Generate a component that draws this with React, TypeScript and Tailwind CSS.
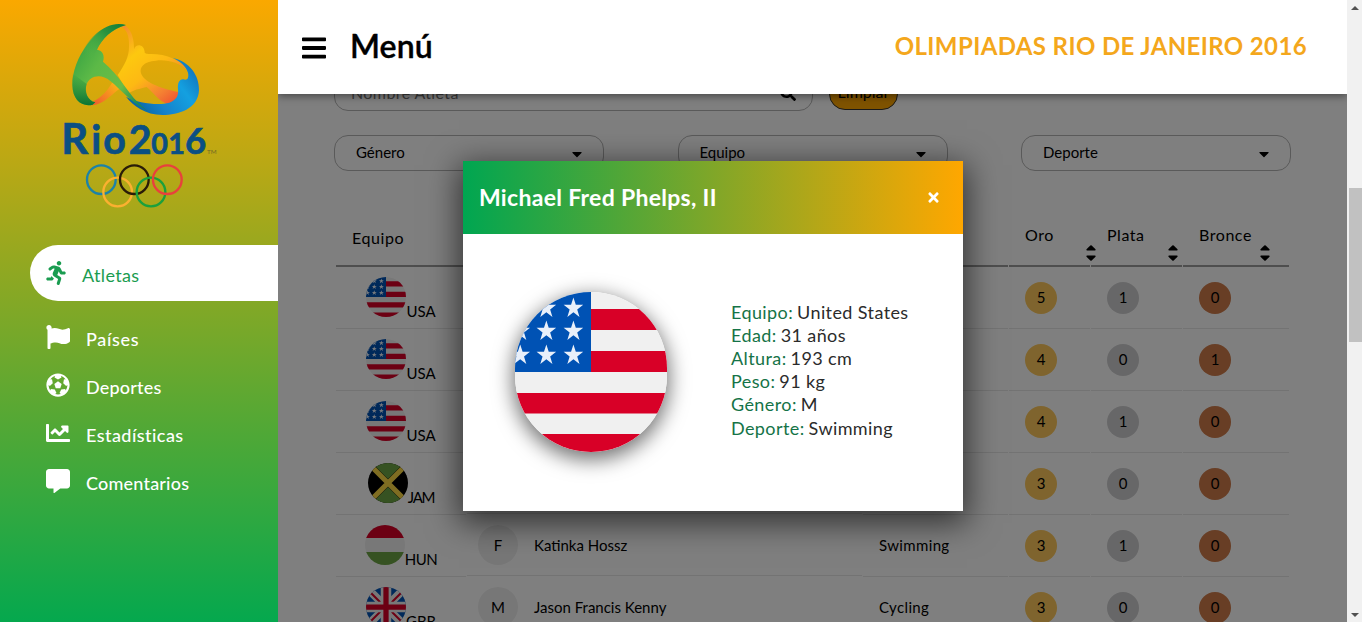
import React from "react";
import {
  FaBars,
  FaCaretDown,
  FaChartLine,
  FaCommentAlt,
  FaFlag,
  FaFutbol,
  FaRunning,
  FaSearch,
  FaTimes,
} from "react-icons/fa";

type Country = "USA" | "JAM" | "HUN" | "GBR";

interface Row {
  country: Country;
  gender?: string;
  name?: string;
  sport?: string;
  medals: [number, number, number];
}

const rows: Row[] = [
  { country: "USA", medals: [5, 1, 0] },
  { country: "USA", medals: [4, 0, 1] },
  { country: "USA", medals: [4, 1, 0] },
  { country: "JAM", medals: [3, 0, 0] },
  { country: "HUN", gender: "F", name: "Katinka Hossz", sport: "Swimming", medals: [3, 1, 0] },
  { country: "GBR", gender: "M", name: "Jason Francis Kenny", sport: "Cycling", medals: [3, 0, 0] },
];

const details = [
  { label: "Equipo:", value: "United States" },
  { label: "Edad:", value: "31 años" },
  { label: "Altura:", value: "193 cm" },
  { label: "Peso:", value: "91 kg" },
  { label: "Género:", value: "M" },
  { label: "Deporte:", value: "Swimming" },
];

const links = [
  { label: "Países", Icon: FaFlag, tracking: "tracking-[0.7px]" },
  { label: "Deportes", Icon: FaFutbol, tracking: "tracking-[0.2px]" },
  { label: "Estadísticas", Icon: FaChartLine, tracking: "tracking-[0.45px]" },
  { label: "Comentarios", Icon: FaCommentAlt, tracking: "tracking-[0.2px]" },
];

const codeTracking: Record<Country, string> = {
  USA: "",
  JAM: "tracking-[-1.2px]",
  HUN: "tracking-[-0.5px]",
  GBR: "",
};

const stars = [
  [61.5, 16],
  [33, 16],
  [61.5, 39],
  [33, 39],
  [5.5, 39],
  [61.5, 63],
  [33, 63],
  [5.5, 63],
];

function Flag({ country, className }: { country: Country; className: string }) {
  return (
    <svg viewBox="0 0 160 160" preserveAspectRatio="none" className={`shrink-0 rounded-full ${className}`}>
      {country === "USA" && (
        <>
          <path fill="#f0f0f0" d="M0 0h160v160H0z" />
          <path fill="#d80027" d="M80 17h80v21H80zM80 59h80v21H80zM0 101h160v20.500H0zM0 142h160v18H0z" />
          <path fill="#0052b4" d="M0 0h80v80H0z" />
          {stars.map(([x, y]) => (
            <path
              key={`${x}-${y}`}
              transform={`translate(${x} ${y})`}
              fill="#e9f0fa"
              d="M0-10.500 2.500-3.300 10.300-3.300 4 1.400 6.400 9 0 4.300-6.400 9-4 1.400-10.300-3.300-2.500-3.300z"
            />
          ))}
        </>
      )}
      {country === "JAM" && (
        <>
          <path fill="#000" d="M0 0h160v160H0z" />
          <path fill="#6da544" d="M16 0h128L80 64zM16 160h128L80 96z" />
          <path stroke="#ffda44" strokeWidth="21" d="M14 14 146 146M146 14 14 146" />
        </>
      )}
      {country === "HUN" && (
        <>
          <path fill="#f0f0f0" d="M0 0h160v160H0z" />
          <path fill="#d80027" d="M0 0h160v52H0z" />
          <path fill="#6da544" d="M0 108h160v52H0z" />
        </>
      )}
      {country === "GBR" && (
        <>
          <path fill="#0052b4" d="M0 0h160v160H0z" />
          <path stroke="#f0f0f0" strokeWidth="32" d="M0 0 160 160M160 0 0 160" />
          <path stroke="#d80027" strokeWidth="8" d="M0 4 76 80M84 80 160 156M160 4 84 80M76 80 0 156" />
          <path stroke="#f0f0f0" strokeWidth="42" d="M80 0v160M0 80h160" />
          <path stroke="#d80027" strokeWidth="21" d="M80 0v160M0 80h160" />
        </>
      )}
    </svg>
  );
}

function Logo() {
  return (
    <svg viewBox="0 0 540 630" className="h-[210px] w-[180px]" fill="none">
      <defs>
        <linearGradient id="leaf" x1="70" y1="150" x2="300" y2="300" gradientUnits="userSpaceOnUse">
          <stop offset="0" stopColor="#3fa743" />
          <stop offset="0.25" stopColor="#5cb947" />
          <stop offset="0.6" stopColor="#6cbc45" />
          <stop offset="0.85" stopColor="#1b8a55" />
          <stop offset="1" stopColor="#0b6f9d" />
        </linearGradient>
        <linearGradient id="base" x1="0" y1="190" x2="0" y2="285" gradientUnits="userSpaceOnUse">
          <stop offset="0" stopColor="#0f7a35" stopOpacity="0" />
          <stop offset="1" stopColor="#0c7434" />
        </linearGradient>
        <linearGradient id="crown" x1="228" y1="45" x2="120" y2="150" gradientUnits="userSpaceOnUse">
          <stop offset="0" stopColor="#137a34" />
          <stop offset="0.4" stopColor="#2a9340" />
          <stop offset="1" stopColor="#5cb947" stopOpacity="0" />
        </linearGradient>
        <linearGradient id="sun" x1="215" y1="60" x2="385" y2="275" gradientUnits="userSpaceOnUse">
          <stop offset="0" stopColor="#f5912a" />
          <stop offset="0.3" stopColor="#fdc80f" />
          <stop offset="0.55" stopColor="#fdb913" />
          <stop offset="0.8" stopColor="#f58232" />
          <stop offset="1" stopColor="#ee5030" />
        </linearGradient>
        <linearGradient id="ember" x1="205" y1="215" x2="125" y2="280" gradientUnits="userSpaceOnUse">
          <stop offset="0" stopColor="#fdb913" />
          <stop offset="1" stopColor="#ef5a30" />
        </linearGradient>
        <linearGradient id="sea" x1="430" y1="180" x2="270" y2="300" gradientUnits="userSpaceOnUse">
          <stop offset="0" stopColor="#1279c0" />
          <stop offset="0.3" stopColor="#14a0e0" />
          <stop offset="0.7" stopColor="#1583cc" />
          <stop offset="1" stopColor="#0a69a8" />
        </linearGradient>
      </defs>
      <path fill="url(#ember)" d="M118 279C150 270 180 235 196 200L222 228C190 245 165 284 125 286Z" />
      <path
        fill="url(#sun)"
        d="M205 41C240 42 253 80 252 118C256 101 281 100 284 125C283 131 292 132 302 132C350 132 396 150 414 184C390 157 350 148 318 152C280 155 268 172 273 190C281 215 325 234 384 246C386 265 375 280 350 281C325 272 308 245 290 231C272 236 245 240 236 252L203 195C224 165 237 140 237 110C238 80 232 55 205 46Z"
      />
      <path
        fill="url(#sea)"
        d="M368 144C420 155 448 198 447 240C445 297 385 315 338 315C285 314 250 288 228 260C265 280 325 287 358 278C382 270 386 254 384 238C382 220 388 207 400 208C413 212 417 203 414 188C408 168 390 154 368 144Z"
      />
      <path
        fill="url(#leaf)"
        d="M228 45C150 25 66 140 67 225C68 270 95 292 128 284L136 277C112 272 103 245 109 225C118 195 155 190 180 212C215 240 240 275 296 305L262 275C235 250 208 195 159 155C165 138 158 120 141 119C155 88 185 56 228 45Z"
      />
      <path fill="url(#base)" d="M67 190L110 222C103 245 112 272 136 277L128 284C95 292 68 270 67 225Z" />
      <path
        fill="url(#crown)"
        d="M228 45C175 28 112 78 84 150L130 140L141 119C155 88 185 56 228 45Z"
      />
      <g fill="#0b4f83" stroke="#0b4f83" strokeWidth="2" fontSize="118" className="font-['Lato'] font-bold">
        <text x="34" y="432" fontSize="126">
          R
        </text>
        <text x="124 160 236" y="432">
          io2
        </text>
        <text x="304 355" y="432" fontSize="86">
          01
        </text>
        <text x="405" y="432" fontSize="110">
          6
        </text>
      </g>
      <text x="471" y="432" fill="#6f6a26" fontSize="19" textLength="29" className="font-['Lato']">
        TM
      </text>
      <g strokeWidth="7">
        <circle cx="154" cy="509" r="43" stroke="#1c82a8" />
        <circle cx="203" cy="546" r="43" stroke="#fbb030" />
        <circle cx="253" cy="509" r="43" stroke="#2a1c08" />
        <circle cx="303" cy="546" r="43" stroke="#1ba03c" />
        <circle cx="352" cy="509" r="43" stroke="#e8413c" />
      </g>
    </svg>
  );
}

function Sidebar() {
  return (
    <aside className="flex w-[278px] shrink-0 flex-col bg-linear-to-b/srgb from-[#faa800] to-[#05a84e]">
      <div className="h-[245px] pt-[10px] pl-[50px]">
        <Logo />
      </div>
      <nav className="flex flex-col text-[18px] leading-6 text-white">
        <a className="ml-[30px] flex h-14 items-center gap-4 rounded-l-full bg-white pl-4 text-[#1a9c50]">
          <FaRunning className="h-6 w-5" />
          <span className="pt-1 tracking-[0.35px]">Atletas</span>
        </a>
        <div className="flex flex-col gap-6 pt-6 pl-[46px]">
          {links.map(({ label, Icon, tracking }) => (
            <a key={label} className="flex h-6 items-center gap-4">
              <Icon className="size-6" />
              <span className={`pt-1 font-medium ${tracking}`}>{label}</span>
            </a>
          ))}
        </div>
      </nav>
    </aside>
  );
}

function Select({ label }: { label: string }) {
  return (
    <div className="flex h-9 w-[270px] items-center justify-between rounded-[14px] border border-[#b4b4b4] pr-[18px] pl-[21px] text-[15px]">
      <span className="pb-[2px]">{label}</span>
      <FaCaretDown className="mt-[2px] size-4" />
    </div>
  );
}

const medalColors = ["bg-[#ffc95c]", "bg-[#cfcfd1]", "bg-[#d07c4a]"];
const gridColumns = "grid grid-cols-[130px_395px_145px_81px_91px_106px] gap-x-px";

function SortArrows() {
  return (
    <svg viewBox="0 0 10 16" className="absolute bottom-1 left-[77px] h-4 w-[10px]" fill="currentColor">
      <path d="M4.300.5Q5-.1 5.700.5L9.500 4.300Q9.900 5.300 9 5.500H1Q.1 5.300.5 4.300Z" />
      <path d="M4.300 15.500Q5 16.100 5.700 15.500L9.500 11.700Q9.900 10.700 9 10.500H1Q.1 10.700.5 11.700Z" />
    </svg>
  );
}

function Table() {
  return (
    <div className="mx-[2px] text-[15px]">
      <div className={`${gridColumns} h-[96px] text-[16px]`}>
        <div className="flex items-end border-b-2 border-[#9c9c9c] pb-[15px] pl-4 tracking-[0.6px]">Equipo</div>
        <div className="border-b-2 border-[#9c9c9c]" />
        <div className="border-b-2 border-[#9c9c9c]" />
        {["Oro", "Plata", "Bronce"].map((label) => (
          <div key={label} className="relative border-b-2 border-[#9c9c9c] pt-[52px] pl-4 tracking-[0.55px]">
            {label}
            <SortArrows />
          </div>
        ))}
      </div>
      {rows.map((row, index) => (
        <div key={index} className={`${gridColumns} h-[62px]`}>
          <div className="flex h-[62px] items-start justify-center border-b border-[#e6e6e6] pt-[10px]">
            <Flag country={row.country} className="size-10" />
            <span className={`pt-[23px] ${codeTracking[row.country]}`}>{row.country}</span>
          </div>
          <div className="flex h-[61px] items-center border-b border-[#e6e6e6] pl-[11px]">
            {row.name && (
              <>
                <span className="flex size-10 items-center justify-center rounded-full bg-[#efefef]">{row.gender}</span>
                <span className="pl-4">{row.name}</span>
              </>
            )}
          </div>
          <div className="flex items-center border-b border-[#e6e6e6] pl-4 tracking-[0.35px]">{row.sport}</div>
          {row.medals.map((count, i) => (
            <div key={i} className="flex items-center border-b border-[#e6e6e6] pl-4">
              <span className={`flex size-8 items-center justify-center rounded-full ${medalColors[i]}`}>{count}</span>
            </div>
          ))}
        </div>
      ))}
    </div>
  );
}

function Modal() {
  return (
    <section className="absolute top-[161px] left-[185px] h-[350px] w-[500px] bg-white shadow-[0_8px_30px_4px_rgba(0,0,0,0.6)]">
      <header className="flex h-[73px] items-center justify-between bg-linear-to-r/srgb from-[#00a651] to-[#ffa700] pr-[22px] pl-4 text-white">
        <h2 className="text-[23px] font-bold tracking-[0.3px]">Michael Fred Phelps, II</h2>
        <FaTimes className="size-[15px]" />
      </header>
      <div className="flex pt-[58px] pl-[52px]">
        <Flag country="USA" className="h-[160px] w-[152px] shadow-[0_6px_20px_2px_rgba(0,0,0,0.55)]" />
        <dl className="ml-16 pt-[8.5px] text-[18px] leading-[23.2px] tracking-[0.4px] text-[#2b2b2b]">
          {details.map(({ label, value }) => (
            <div key={label} className="flex gap-1">
              <dt className="text-[#157347]">{label}</dt>
              <dd>{value}</dd>
            </div>
          ))}
        </dl>
      </div>
    </section>
  );
}

export default function App() {
  return (
    <div className="flex h-[622px] w-[1362px] overflow-hidden bg-white font-['Lato','Open_Sans',sans-serif] text-black">
      <Sidebar />
      <main className="relative flex w-[1069px] flex-col overflow-hidden">
        <header className="z-10 flex h-[94px] shrink-0 items-center justify-between bg-white pr-10 pl-6 shadow-[0_2px_8px_rgba(0,0,0,0.45)]">
          <div className="flex items-center gap-6">
            <FaBars className="mt-[2px] h-7 w-6" />
            <span className="pb-[2px] text-[32px] font-semibold tracking-[0.1px] [-webkit-text-stroke:0.4px_black]">
              Menú
            </span>
          </div>
          <h1 className="pb-[2px] text-[24px] font-bold tracking-[0.38px] text-[#f4a71c]">
            OLIMPIADAS RIO DE JANEIRO 2016
          </h1>
        </header>
        <div className="-mt-[19px] px-14">
          <div className="flex gap-4">
            <div className="flex h-9 w-[479px] items-center justify-between rounded-[14px] border border-[#b4b4b4] px-4 text-[16px] text-[#757575]">
              <span className="tracking-[0.4px]">Nombre Atleta</span>
              <FaSearch className="size-4 text-black" />
            </div>
            <div className="flex h-[35px] w-[69px] items-center justify-center rounded-[16px] border border-[#333] bg-[#ffa700] pb-[2px] text-[16px]">
              Limpiar
            </div>
          </div>
          <div className="flex justify-between pt-6">
            <Select label="Género" />
            <Select label="Equipo" />
            <Select label="Deporte" />
          </div>
          <Table />
        </div>
        <div className="absolute inset-x-0 top-0 bottom-0 bg-black/50" />
        <Modal />
      </main>
      <div className="flex w-[15px] flex-col items-center justify-between bg-[#f1f1f1]">
        <svg viewBox="0 0 15 188" className="h-[188px] w-[15px] shrink-0">
          <path fill="#505050" d="M4 10h8L8 6z" />
        </svg>
        <div className="ml-[2px] h-[154px] w-[13px] shrink-0 bg-[#c1c1c1]" />
        <svg viewBox="0 0 15 280" className="h-[280px] w-[15px] shrink-0">
          <path fill="#505050" d="M4 271h8l-4 4z" />
        </svg>
      </div>
    </div>
  );
}
